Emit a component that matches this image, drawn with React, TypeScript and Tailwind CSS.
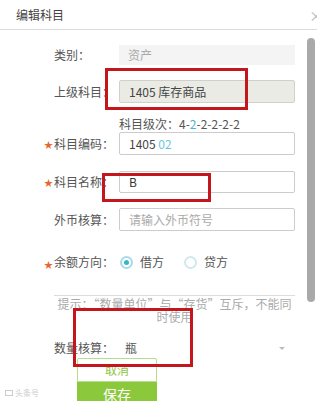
import React from "react";

function Label({ text, required }: { text: string; required?: boolean }) {
  return (
    <div className="relative w-[65px] shrink-0 whitespace-nowrap leading-[16px]">
      {required && (
        <span className="absolute left-[-10px] top-[1px] text-[9px] text-[#e8652c]">★</span>
      )}
      {text}
    </div>
  );
}

export default function App() {
  return (
    <div className="relative w-[317px] h-[401px] overflow-hidden bg-white text-[12px] text-[#555] font-['Noto_Sans_CJK_SC','Noto_Sans',sans-serif]">
      {/* header */}
      <div className="h-[30px] border-b border-[#dcdcdc] flex items-center pl-[16px] text-[#444] leading-[16px]">
        编辑科目
      </div>
      <span className="absolute left-[309px] top-[5px] text-[14px] text-[#bbb]">×</span>

      {/* scrollbar */}
      <div className="absolute left-[307px] top-[38px] w-[8px] h-[264px] rounded-[4px] bg-[#a9a9a9]" />

      <div className="flex flex-col pl-[54px] w-[295px]">
        <div className="mt-[15px] flex items-center">
          <Label text="类别：" />
          <div className="w-[176px] h-[20px] bg-[#f4f4f4] pl-[9px] flex items-center text-[#aaa]">资产</div>
        </div>

        <div className="mt-[15px] flex items-center">
          <Label text="上级科目：" />
          <div className="w-[176px] h-[23px] bg-[#ebebe6] border border-[#d0d0cc] rounded-[2px] pl-[9px] flex items-center text-[#444]">
            1405 库存商品
          </div>
        </div>

        <div className="mt-[13px] ml-[65px] leading-[16px] text-[#555]">
          科目级次：4-<span className="text-[#4ab3d6]">2</span>-2-2-2-2
        </div>

        <div className="flex items-center">
          <Label text="科目编码：" required />
          <div className="w-[176px] h-[23px] border border-[#ccc] rounded-[2px] pl-[9px] flex items-center text-[#444]">
            1405&nbsp;<span className="text-[#6cc8dc]">02</span>
          </div>
        </div>

        <div className="mt-[16px] flex items-center">
          <Label text="科目名称：" required />
          <div className="w-[176px] h-[22px] border border-[#ccc] rounded-[2px] pl-[9px] flex items-center text-[#333]">
            B
          </div>
        </div>

        <div className="mt-[15px] flex items-center">
          <Label text="外币核算：" />
          <div className="w-[176px] h-[23px] border border-[#ccc] rounded-[2px] pl-[9px] flex items-center text-[#aaa]">
            请输入外币符号
          </div>
        </div>

        <div className="mt-[23px] flex items-center">
          <div className="relative w-[65px] shrink-0 whitespace-nowrap leading-[16px]">
            <span className="absolute left-[-10px] top-[3px] text-[9px] text-[#e8652c]">★</span>
            余额方向：
          </div>
          <div className="flex items-center ml-[1px]">
            <span className="w-[13px] h-[13px] rounded-full border-2 border-[#a8dbe8] flex items-center justify-center">
              <span className="w-[5px] h-[5px] rounded-full bg-[#3ab3cb]" />
            </span>
            <span className="ml-[7px] leading-[16px]">借方</span>
            <span className="ml-[20px] w-[13px] h-[13px] rounded-full border-2 border-[#cfe9ef]" />
            <span className="ml-[7px] leading-[16px]">贷方</span>
          </div>
        </div>

        <div className="mt-[25px] h-px bg-[#ddd] w-[241px]" />

        <div className="mt-[1px] w-[241px] text-[#aaa] leading-[13px] text-center">
          提示：“数量单位”与“存货”互斥，不能同时使用
        </div>

        <div className="mt-[17px] flex items-center w-[241px]">
          <div className="w-[71px] shrink-0 leading-[16px]">数量核算：</div>
          <div className="flex-1 leading-[16px] text-[#555]">瓶</div>
          <span className="mr-[10px] w-0 h-0 border-l-[3px] border-r-[3px] border-t-[3px] border-l-transparent border-r-transparent border-t-[#bbb]" />
        </div>

        <div className="mt-[2px] ml-[23px] w-[80px] flex flex-col">
          <div className="h-[24px] border border-[#b8dc8e] rounded-t-[2px] flex items-center justify-center text-[#8cc63e] text-[12px]">
            取消
          </div>
          <div className="h-[24px] bg-[#8cc83c] flex items-center justify-center text-white text-[14px]">
            保存
          </div>
        </div>
      </div>

      {/* red annotation boxes */}
      <div className="absolute left-[105px] top-[68px] w-[143px] h-[42px] border-[3px] border-[#c3161d]" />
      <div className="absolute left-[102px] top-[173px] w-[109px] h-[29px] border-[3px] border-[#c3161d]" />
      <div className="absolute left-[73px] top-[308px] w-[120px] h-[59px] border-[3px] border-[#c3161d]" />

      {/* watermark */}
      <div className="absolute left-[5px] top-[388px] flex items-center gap-[2px] text-[8px] text-[#ccc] leading-[10px]">
        <span className="w-[8px] h-[6px] border border-[#ccc]" />
        头条号
      </div>
    </div>
  );
}
